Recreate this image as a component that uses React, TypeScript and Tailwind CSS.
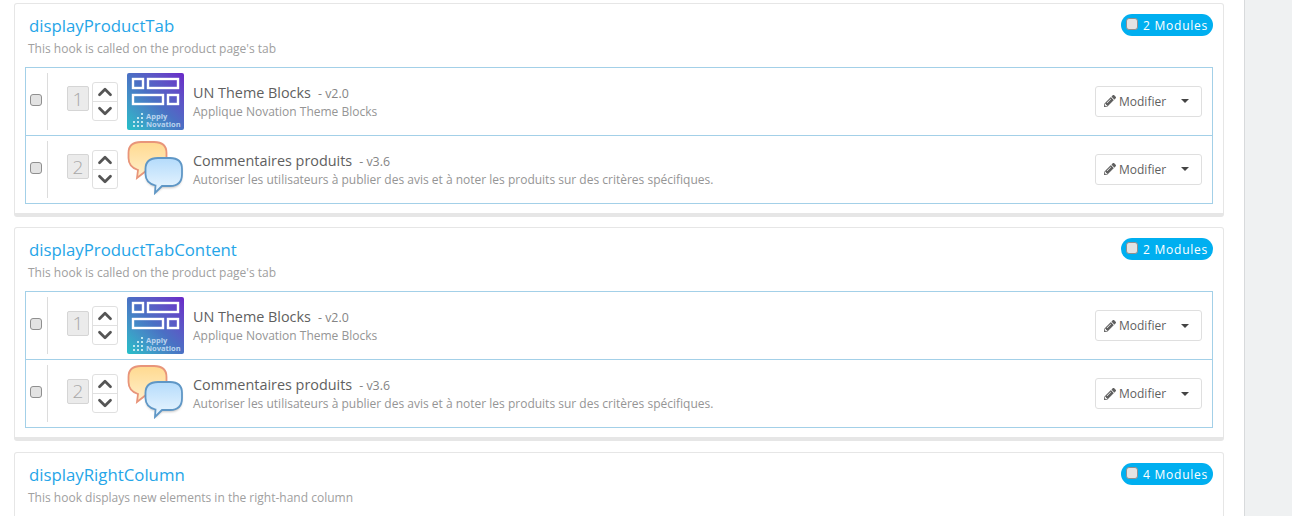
import { ChevronDown, ChevronUp } from "lucide-react"
import { FaPencilAlt } from "react-icons/fa"

const hooks = [
  {
    name: "displayProductTab",
    desc: "This hook is called on the product page's tab",
    count: 2,
    modules: true,
  },
  {
    name: "displayProductTabContent",
    desc: "This hook is called on the product page's tab",
    count: 2,
    modules: true,
  },
  {
    name: "displayRightColumn",
    desc: "This hook displays new elements in the right-hand column",
    count: 4,
    modules: false,
  },
]

const modules = [
  {
    pos: 1,
    title: "UN Theme Blocks",
    version: "- v2.0",
    desc: "Applique Novation Theme Blocks",
    logo: "apply",
  },
  {
    pos: 2,
    title: "Commentaires produits",
    version: "- v3.6",
    desc: "Autoriser les utilisateurs à publier des avis et à noter les produits sur des critères spécifiques.",
    logo: "comments",
  },
]

const Check = ({ className }: { className: string }) => (
  <span className={`block w-[12px] h-[12px] rounded-[3px] border border-[#8f8f8f] bg-[#e3e3e3] shrink-0 ${className}`}></span>
)

const ApplyLogo = () => (
  <div className="relative w-[57px] h-[57px] rounded-[2px] overflow-hidden bg-gradient-to-tr from-[#22c0c8] via-[#4a70c4] to-[#6a26c8] shrink-0">
    <svg width="57" height="57" viewBox="0 0 57 57" className="absolute left-0 top-0">
      <g fill="none" stroke="#fff" strokeWidth="2.400">
        <rect x="6" y="6" width="10" height="9" />
        <rect x="21" y="6" width="30" height="9" />
        <rect x="6" y="22" width="30" height="9" />
        <rect x="41" y="22" width="10" height="9" />
      </g>
      <g fill="#bfe6ee">
        <rect x="14" y="40" width="2" height="2" />
        <rect x="14" y="44" width="2" height="2" />
        <rect x="10" y="44" width="2" height="2" />
        <rect x="6" y="48" width="2" height="2" />
        <rect x="10" y="48" width="2" height="2" />
        <rect x="14" y="48" width="2" height="2" />
        <rect x="6" y="52" width="2" height="2" />
        <rect x="10" y="52" width="2" height="2" />
        <rect x="14" y="52" width="2" height="2" />
      </g>
    </svg>
    <div className="absolute left-[19px] top-[39px] text-[7.5px] leading-[8px] font-bold text-[#b9d3ee]">
      <div>Apply</div>
      <div>Novation</div>
    </div>
  </div>
)

const CommentsLogo = () => (
  <svg width="57" height="57" viewBox="0 0 57 57" className="shrink-0 overflow-visible">
    <defs>
      <linearGradient id="orange" x1="0" y1="0" x2="0" y2="1">
        <stop offset="0" stopColor="#ffd98f" />
        <stop offset="1" stopColor="#fff0cc" />
      </linearGradient>
      <linearGradient id="blue" x1="0" y1="0" x2="0" y2="1">
        <stop offset="0" stopColor="#b4dbfb" />
        <stop offset="1" stopColor="#ecf7ff" />
      </linearGradient>
      <filter id="soft" x="-20%" y="-20%" width="140%" height="140%">
        <feGaussianBlur stdDeviation="0.400" />
      </filter>
      <filter id="drop" x="-20%" y="-20%" width="140%" height="140%">
        <feGaussianBlur stdDeviation="1" />
      </filter>
    </defs>
    <g filter="url(#soft)">
      <path
        d="M14 1H27Q39.500 1 39.500 12V18Q39.500 30 27 30H19L10 37L11 29Q1.500 26 1.500 17V12Q1.500 1 14 1Z"
        fill="url(#orange)"
        stroke="#e8957a"
        strokeWidth="1.800"
      />
      <path
        d="M31 18.500H43Q55 18.500 55 30V35Q55 47 43 47H35L28 53L28.500 46Q18.500 44 18.500 34V30Q18.500 18.500 31 18.500Z"
        fill="#8a8a8a"
        opacity="0.500"
        filter="url(#drop)"
      />
      <path
        d="M31 17H43Q55 17 55 28V33Q55 45 43 45H35L28 52L28.500 44.500Q18.500 42 18.500 33V28Q18.500 17 31 17Z"
        fill="url(#blue)"
        stroke="#5f97c6"
        strokeWidth="1.800"
      />
    </g>
  </svg>
)

const ModuleRow = ({ mod }: { mod: (typeof modules)[number] }) => (
  <div className="flex items-center h-[68px] last:h-[67px] pl-[4px] pr-[10px] border-b border-[#a3d0e8] last:border-b-0">
    <Check className="-mt-[3px]" />
    <div className="w-px h-[57px] bg-[#dcdcdc] ml-[5px] mr-[19px]"></div>
    <div className="flex items-center justify-center w-[22px] h-[25px] -mt-[5px] rounded-[2px] border border-[#d5d5d5] bg-[#ebebeb] text-[19px] font-light text-[#a8a8a8] mr-[3px]">
      {mod.pos}
    </div>
    <div className="flex flex-col w-[26px] h-[39px] rounded-[3px] border border-[#e0e0e0] mr-[9px]">
      <div className="flex-1 min-h-0 flex items-center justify-center border-b border-[#e0e0e0]">
        <ChevronUp size={22} strokeWidth={3} className="shrink-0 text-[#555555]" />
      </div>
      <div className="flex-1 min-h-0 flex items-center justify-center">
        <ChevronDown size={22} strokeWidth={3} className="shrink-0 text-[#555555]" />
      </div>
    </div>
    {mod.logo === "apply" ? <ApplyLogo /> : <CommentsLogo />}
    <div className="flex-1 pl-[9px]">
      <div className="text-[14.4px] leading-[19px] text-[#5f5f5f]">
        {mod.title}
        <span className="text-[12.4px] text-[#858585] ml-[7px]">{mod.version}</span>
      </div>
      <div className="text-[12px] leading-[17px] text-[#959595]">{mod.desc}</div>
    </div>
    <div className="flex items-center w-[107px] h-[31px] rounded-[3px] border border-[#dfdfdf] pl-[8px] text-[#5f5f5f]">
      <FaPencilAlt size={12} className="mr-[3px]" />
      <span className="text-[12px] mt-[1px]">Modifier</span>
      <span className="ml-[15px] border-x-[4px] border-t-[4px] border-x-transparent border-t-[#444444]"></span>
    </div>
  </div>
)

export default function App() {
  return (
    <div className="flex h-[516px] overflow-hidden bg-white font-['Open_Sans',sans-serif]">
      <div className="w-[1244px] pt-[2.9px] pl-[14px] pr-[20px] flex flex-col gap-[10.5px]">
        {hooks.map((hook) => (
          <section
            key={hook.name}
            className="relative shrink-0 rounded-[3px] border border-[#e6e6e6] border-b-[4px] bg-white pt-[11px] px-[10px] pb-[9px]"
          >
            <div className="absolute right-[10px] top-[10px] flex items-center gap-[5px] h-[22px] rounded-[11px] bg-[#00aff0] px-[5px] text-[12px] font-medium tracking-[0.75px] text-white">
              <Check className="-mt-[2px]" />
              <span className="mt-[2px]">{hook.count} Modules</span>
            </div>
            <h3 className="pl-[4px] text-[16.8px] leading-[22px] text-[#25a5e8]">{hook.name}</h3>
            <p className="pl-[3px] mt-[3px] text-[12px] leading-[17px] text-[#a0a0a0]">{hook.desc}</p>
            {hook.modules ? (
              <div className="mt-[10px] border border-[#a3d0e8]">
                {modules.map((mod) => (
                  <ModuleRow key={mod.pos} mod={mod} />
                ))}
              </div>
            ) : (
              <div className="h-[60px]"></div>
            )}
          </section>
        ))}
      </div>
      <div className="flex-1 border-l border-[#d8dadc] bg-[#eff1f2]"></div>
    </div>
  )
}
